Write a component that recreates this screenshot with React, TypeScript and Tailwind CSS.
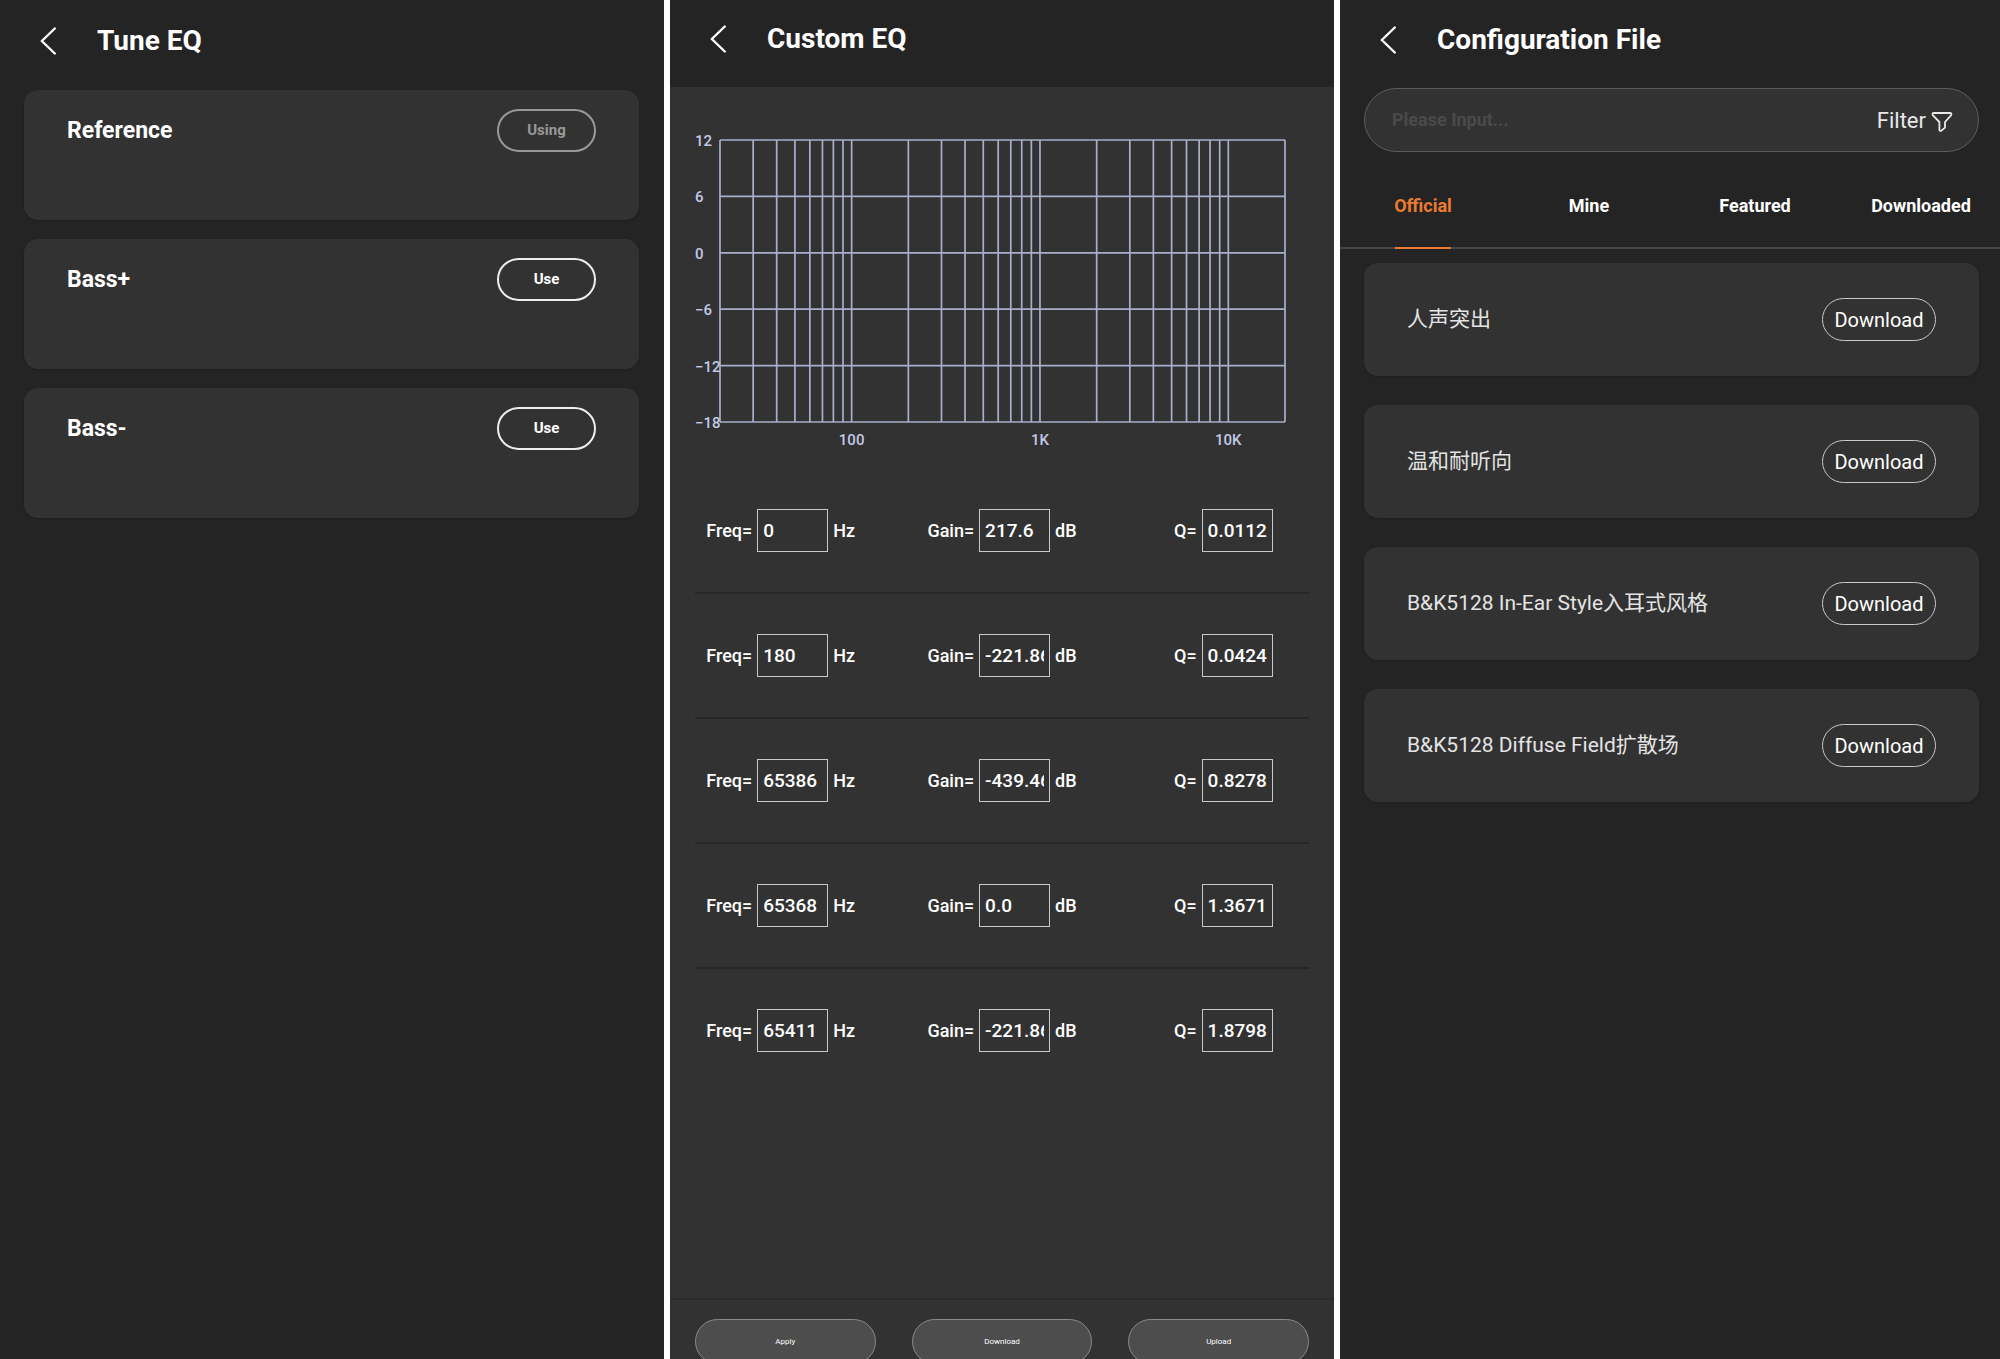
import { useState } from "react";

interface EqBand {
  freq: string;
  gain: string;
  q: string;
}

const PRESETS = ["Reference", "Bass+", "Bass-"];

const BANDS: EqBand[] = [
  { freq: "0", gain: "217.6", q: "0.0112" },
  { freq: "180", gain: "-221.86", q: "0.0424" },
  { freq: "65386", gain: "-439.46", q: "0.8278" },
  { freq: "65368", gain: "0.0", q: "1.3671" },
  { freq: "65411", gain: "-221.86", q: "1.8798" },
];

const TABS = ["Official", "Mine", "Featured", "Downloaded"];

const FILES = [
  "人声突出",
  "温和耐听向",
  "B&K5128 In-Ear Style入耳式风格",
  "B&K5128 Diffuse Field扩散场",
];

// Chart plot area in viewBox units
const PLOT = { left: 50, top: 12, width: 565, height: 282 };
const MIN_FREQ = 20;
const MAX_FREQ = 20000;

const freqToX = (freq: number) =>
  PLOT.left +
  (Math.log10(freq / MIN_FREQ) / Math.log10(MAX_FREQ / MIN_FREQ)) * PLOT.width;

const gainToY = (gain: number) => PLOT.top + ((12 - gain) / 30) * PLOT.height;

const GRID_FREQS = [10, 100, 1000, 10000]
  .flatMap((base) => Array.from({ length: 9 }, (_, i) => base * (i + 1)))
  .filter((freq) => freq >= MIN_FREQ && freq <= MAX_FREQ);

const GRID_GAINS = [12, 6, 0, -6, -12, -18];

const FREQ_LABELS = [
  { freq: 100, label: "100" },
  { freq: 1000, label: "1K" },
  { freq: 10000, label: "10K" },
];

const PageHeader = ({
  title,
  className,
}: {
  title: string;
  className: string;
}) => (
  <header
    className={`flex shrink-0 items-center gap-10 pl-[39px] ${className}`}
  >
    <button type="button" aria-label="Back">
      <svg width="18" height="28" viewBox="0 0 18 28" fill="none">
        <path
          d="M15.8 1.5 L2.8 14 L15.8 26.5"
          stroke="white"
          strokeWidth="2.4"
          strokeLinecap="round"
          strokeLinejoin="round"
        />
      </svg>
    </button>
    <h1 className="text-[28px] leading-8 font-bold">{title}</h1>
  </header>
);

const EqChart = () => (
  <svg
    viewBox="0 0 664 330"
    className="w-full"
    role="img"
    aria-label="Equalizer response"
  >
    <g stroke="#a9afcb" strokeWidth="1.7">
      {GRID_FREQS.map((freq) => (
        <line
          key={freq}
          x1={freqToX(freq)}
          x2={freqToX(freq)}
          y1={PLOT.top}
          y2={PLOT.top + PLOT.height}
        />
      ))}
      {GRID_GAINS.map((gain) => (
        <line
          key={gain}
          x1={PLOT.left}
          x2={PLOT.left + PLOT.width}
          y1={gainToY(gain)}
          y2={gainToY(gain)}
        />
      ))}
    </g>
    <g fill="#c3c9e8" fontSize="15" fontWeight="500">
      {GRID_GAINS.map((gain) => (
        <text key={gain} x="25" y={gainToY(gain) + 6}>
          {gain < 0 ? `−${-gain}` : gain}
        </text>
      ))}
      {FREQ_LABELS.map(({ freq, label }) => (
        <text key={freq} x={freqToX(freq)} y="317" textAnchor="middle">
          {label}
        </text>
      ))}
    </g>
  </svg>
);

const BandInput = ({
  label,
  unit,
  value,
}: {
  label: string;
  unit?: string;
  value: string;
}) => (
  <label className="flex items-center justify-center gap-[5px]">
    {label}=
    <input
      type="text"
      defaultValue={value}
      className="h-[43px] w-[71px] border border-[#c8c8c8] px-[5px] text-[19px]"
    />
    {unit}
  </label>
);

const TunePanel = () => {
  const [active, setActive] = useState("Reference");

  return (
    <section className="bg-[#242424]">
      <PageHeader title="Tune EQ" className="h-[90px] pb-2" />
      <ul className="flex flex-col gap-[19px] pr-[25px] pl-6">
        {PRESETS.map((preset) => (
          <li
            key={preset}
            className="flex h-[130px] items-start justify-between rounded-[14px] bg-[#323232] px-[43px] pt-[19px] shadow-sm"
          >
            <h2 className="text-[23px] leading-[43px] font-bold">{preset}</h2>
            <button
              type="button"
              onClick={() => setActive(preset)}
              className={`h-[43px] w-[99px] rounded-full border-2 text-[15px] font-bold ${
                active === preset
                  ? "border-[#999999] text-[#999999]"
                  : "border-[#eeeeee] text-white"
              }`}
            >
              {active === preset ? "Using" : "Use"}
            </button>
          </li>
        ))}
      </ul>
    </section>
  );
};

const CustomPanel = () => (
  <section className="flex flex-col bg-[#323232]">
    <PageHeader title="Custom EQ" className="h-[87px] bg-[#242424] pb-[10px]" />
    <div className="pt-[41px]">
      <EqChart />
    </div>
    <div className="mt-[11px] px-[25px] text-lg font-medium">
      {BANDS.map((band, index) => (
        <div
          key={band.q}
          className={`h-[125px] border-b-2 ${
            index === BANDS.length - 1
              ? "border-transparent"
              : "border-[#272727]"
          }`}
        >
          <div className="-mx-[25px] grid h-full grid-cols-3">
            <BandInput label="Freq" unit="Hz" value={band.freq} />
            <BandInput label="Gain" unit="dB" value={band.gain} />
            <BandInput label="Q" value={band.q} />
          </div>
        </div>
      ))}
    </div>
    <footer className="mt-auto flex h-[61px] shrink-0 gap-9 border-t-2 border-[#2a2a2a] px-[25px] pt-[19px]">
      {["Apply", "Download", "Upload"].map((action) => (
        <button
          key={action}
          type="button"
          className="h-[45px] flex-1 rounded-full border border-[#8a8a8a] bg-[#4d4d4d] text-[8px]"
        >
          {action}
        </button>
      ))}
    </footer>
  </section>
);

const FilterIcon = () => (
  <svg
    width="22"
    height="22"
    viewBox="0 0 22 22"
    fill="none"
    className="mt-1"
  >
    <path
      d="M2.8 2 H19 C20.4 2 20.8 3.4 20 4.3 L14 11 V16.6 L10.4 19.6 C9.6 20.3 8.4 19.9 8.4 18.8 V11 L1.9 4.3 C1.1 3.4 1.5 2 2.8 2 Z"
      stroke="currentColor"
      strokeWidth="1.8"
      strokeLinejoin="round"
    />
  </svg>
);

const FilesPanel = () => {
  const [tab, setTab] = useState("Official");

  return (
    <section className="bg-[#242424]">
      <PageHeader title="Configuration File" className="h-22 pb-[9px]" />
      <div className="mr-[25px] ml-6 flex h-16 items-center justify-between rounded-full border border-[#5c5c5c] bg-[#323232] pr-[25px] pl-[27px]">
        <input
          type="text"
          aria-label="Search"
          placeholder="Please Input..."
          className="min-w-0 flex-1 text-lg font-bold outline-none placeholder:text-[#4a4a4a]"
        />
        <button
          type="button"
          className="flex items-center gap-[5px] text-[22px] text-[#e8e8e8]"
        >
          Filter
          <FilterIcon />
        </button>
      </div>
      <div
        role="tablist"
        className="mt-3 grid h-[85px] grid-cols-4 border-b-2 border-[#464648]"
      >
        {TABS.map((name) => (
          <button
            key={name}
            type="button"
            role="tab"
            aria-selected={tab === name}
            onClick={() => setTab(name)}
            className={`relative text-lg font-bold ${
              tab === name
                ? "text-[#ec7a30] after:absolute after:-bottom-0.5 after:left-1/2 after:h-0.5 after:w-14 after:-translate-x-1/2 after:bg-[#ec7a30]"
                : ""
            }`}
          >
            {name}
          </button>
        ))}
      </div>
      <ul className="mt-[14px] flex flex-col gap-[29px] pr-[25px] pl-6">
        {FILES.map((file) => (
          <li
            key={file}
            className="flex h-[113px] items-center justify-between rounded-[14px] bg-[#323232] px-[43px] shadow-sm"
          >
            <span className="text-[21px] text-[#e4e4e4]">{file}</span>
            <button
              type="button"
              className="h-[43px] w-[114px] rounded-full border border-[#c8c8c8] text-xl"
            >
              Download
            </button>
          </li>
        ))}
      </ul>
    </section>
  );
};

export default function App() {
  return (
    <main className="h-screen overflow-hidden bg-white font-[Roboto,'Noto_Sans_CJK_SC',sans-serif] text-white">
      <div className="-mr-1 grid h-full grid-cols-3 gap-1.5">
        <TunePanel />
        <CustomPanel />
        <FilesPanel />
      </div>
    </main>
  );
}
